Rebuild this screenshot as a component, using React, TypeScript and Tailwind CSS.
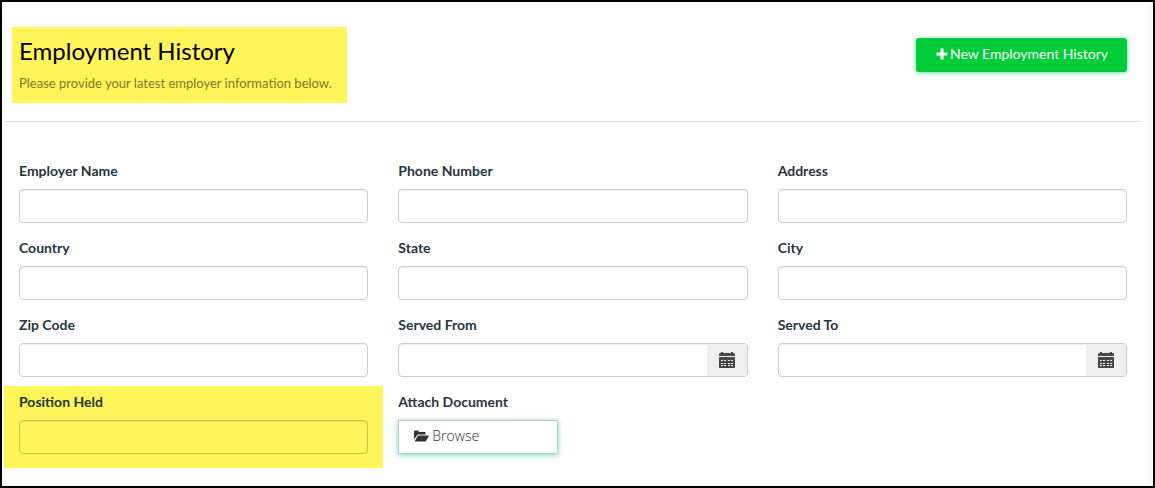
import React from 'react';

interface FieldProps {
  id: string;
  label: string;
  type?: 'text' | 'date';
  highlighted?: boolean;
}

const PlusIcon = () => (
  <svg viewBox="0 0 12 12" className="h-3 w-3" fill="currentColor" aria-hidden="true">
    <path d="M4.5 0.5h3v4h4v3h-4v4h-3v-4h-4v-3h4z" />
  </svg>
);

const CalendarIcon = () => (
  <svg viewBox="0 0 16 16" className="h-4 w-4" fill="currentColor" aria-hidden="true">
    <path d="M0 4V2l1-1h1V0h2v1h8V0h2v1h1l1 1v2z" />
    <path
      fillRule="evenodd"
      d="M0 5h16v10.5l-.5.5H.5l-.5-.5zM2 8v1h2V8zm3 0v1h2V8zm4 0v1h2V8zm3 0v1h2V8zM2 11v1h2v-1zm3 0v1h2v-1zm4 0v1h2v-1zm3 0v1h2v-1zM2 13v1h2v-1zm3 0v1h2v-1zm4 0v1h2v-1zm3 0v1h2v-1z"
    />
  </svg>
);

const FolderOpenIcon = () => (
  <svg viewBox="0 0 15 12" className="h-3 w-[15px]" fill="currentColor" aria-hidden="true">
    <path d="M0 9.6V1.2Q0 .4.8.4H4q.8 0 .8.8v.9h6q.8 0 .8.8v1.7H4.7q-1.1 0-1.8.9z" />
    <path d="M.6 11.4 3.4 6.5q.5-.9 1.5-.9h9.3q.9 0 .5.7l-2.4 4.2q-.5.9-1.5.9z" />
  </svg>
);

const Field: React.FC<FieldProps> = ({ id, label, type = 'text', highlighted }) => (
  <div className={highlighted ? 'bg-[#fff45a] px-[15px] pt-2 pb-[14px]' : 'px-[15px] pt-2 pb-[9px]'}>
    <label
      htmlFor={id}
      className={`mb-2.5 block text-sm leading-4 font-bold ${highlighted ? 'text-[#26361c]' : 'text-[#263640]'}`}
    >
      {label}
    </label>
    {type === 'date' ? (
      <div className="flex h-[34px] overflow-hidden rounded border border-[#ccc]">
        <input
          id={id}
          type="text"
          className="min-w-0 flex-1 px-3 text-sm shadow-[inset_0_1px_1px_rgba(0,0,0,0.075)] outline-none"
        />
        <button
          type="button"
          aria-label={`Pick ${label} date`}
          className="flex w-10 items-center justify-center bg-[#eee] text-[#484848]"
        >
          <CalendarIcon />
        </button>
      </div>
    ) : (
      <input
        id={id}
        type="text"
        className={`block h-[34px] w-full rounded border px-3 text-sm shadow-[inset_0_1px_1px_rgba(0,0,0,0.075)] outline-none ${
          highlighted ? 'border-[#ccc348] bg-transparent' : 'border-[#ccc] bg-white'
        }`}
      />
    )}
  </div>
);

const fields: FieldProps[] = [
  { id: 'employerName', label: 'Employer Name' },
  { id: 'phoneNumber', label: 'Phone Number' },
  { id: 'address', label: 'Address' },
  { id: 'country', label: 'Country' },
  { id: 'state', label: 'State' },
  { id: 'city', label: 'City' },
  { id: 'zipCode', label: 'Zip Code' },
  { id: 'servedFrom', label: 'Served From', type: 'date' },
  { id: 'servedTo', label: 'Served To', type: 'date' },
  { id: 'positionHeld', label: 'Position Held', highlighted: true },
];

const App: React.FC = () => {
  return (
    <div className="min-h-screen border-2 border-black bg-[#f8f8f8] pr-[5px] pb-px font-['Lato',sans-serif]">
      <main className="rounded-br bg-white pt-[25px] pr-1.5 pb-4 pl-0.5">
        <header className="flex items-start justify-between border-b border-[#e5e5e5] pr-[15px] pb-[18px] pl-2">
          <div className="bg-[#fff45a] pt-2 pr-[15px] pb-2.5 pl-[7px]">
            <h1 className="text-2xl leading-8 text-black">Employment History</h1>
            <p className="mt-1.5 text-[13px] leading-5 text-[#7d7a2b]">
              Please provide your latest employer information below.
            </p>
          </div>
          <button
            type="button"
            className="mt-[11px] flex h-[34px] items-center gap-0.5 rounded-[3px] bg-[#00cd37] pr-[19px] pb-0.5 pl-5 text-sm text-white shadow-[0_1px_5px_rgba(0,200,130,0.6)]"
          >
            <PlusIcon />
            New Employment History
          </button>
        </header>

        <form className="grid grid-cols-3 pt-[33px]">
          {fields.map(field => (
            <Field key={field.id} {...field} />
          ))}

          <div className="px-[15px] pt-2">
            <label htmlFor="browse" className="mb-2.5 block text-sm leading-4 font-bold text-[#263640]">
              Attach Document
            </label>
            <button
              id="browse"
              type="button"
              className="flex h-[34px] w-40 items-center gap-[3px] border border-[#c4c8c6] bg-white px-[15px] pb-0.5 font-['Open_Sans',sans-serif] text-sm font-light text-[#333] shadow-[0_1px_5px_rgba(0,200,130,0.6)]"
            >
              <FolderOpenIcon />
              Browse
            </button>
          </div>
        </form>
      </main>
    </div>
  );
};

export default App;
